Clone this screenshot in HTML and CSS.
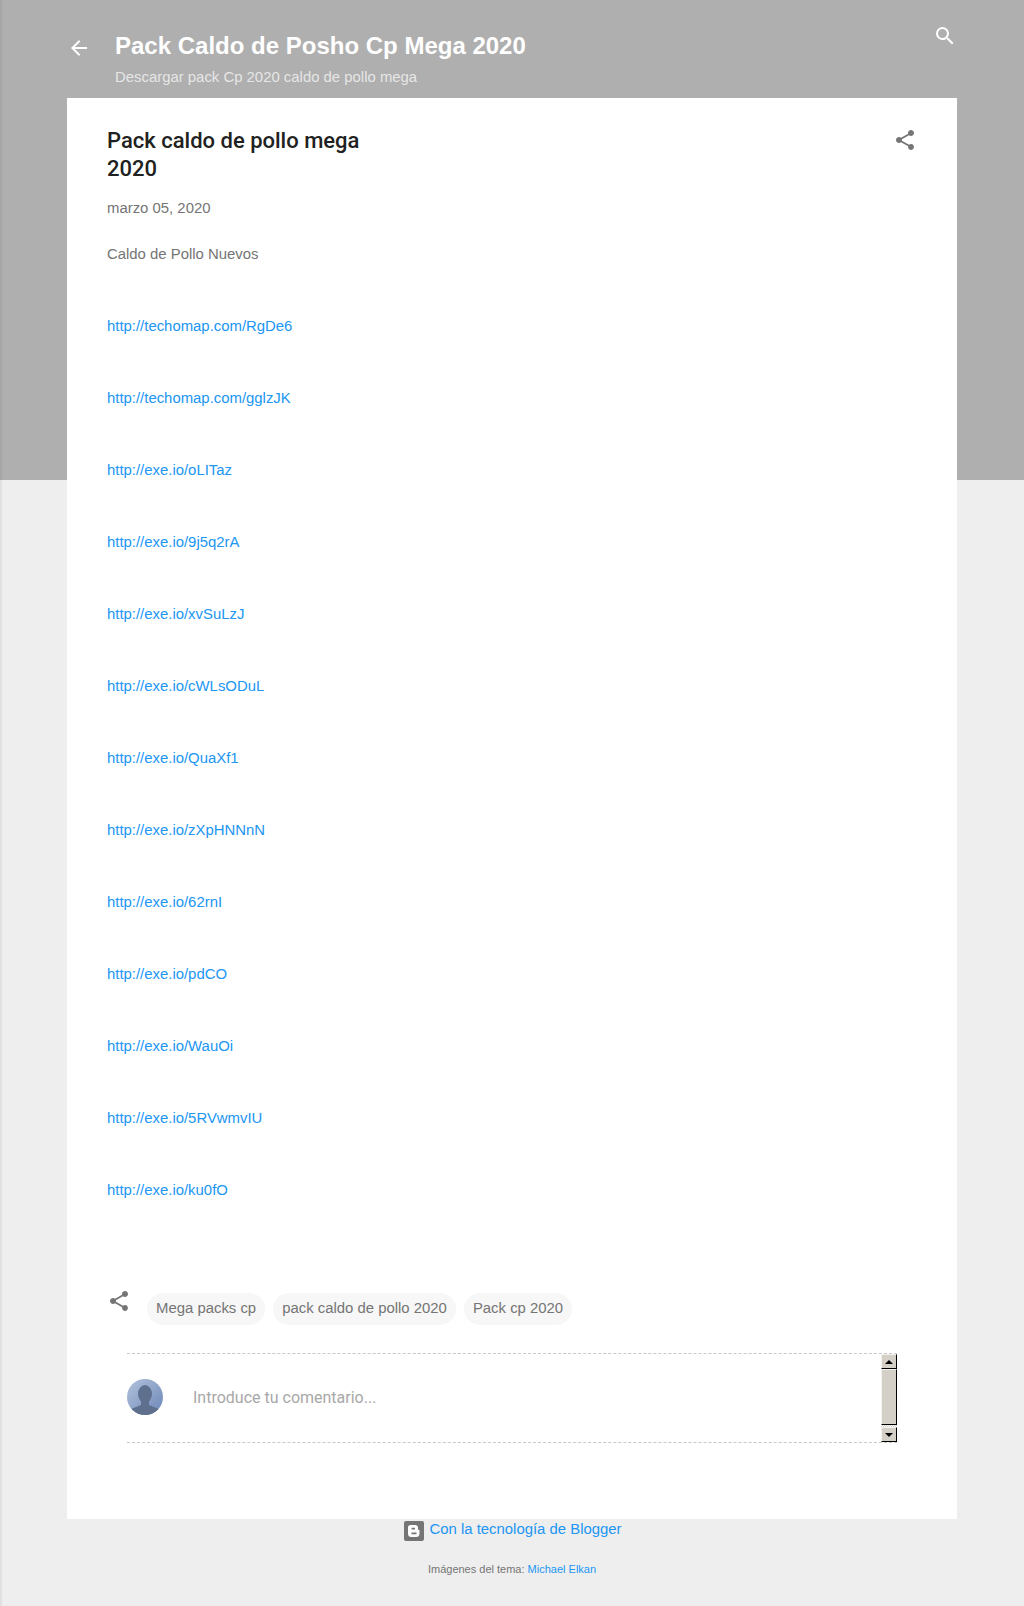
FILE: index.html
```html
<!DOCTYPE html>
<html lang="es">
<head>
  <meta charset="UTF-8">
  <title>Pack caldo de pollo mega 2020</title>
  <meta name="viewport" content="width=device-width, initial-scale=1.0">
  <link rel="stylesheet" href="styles.css">
</head>
<body>

  <header class="site-head">
    <svg class="back-icon" viewBox="0 0 24 24"><path d="M20 11H7.83l5.59-5.59L12 4l-8 8 8 8 1.41-1.41L7.83 13H20v-2z"/></svg>
    <div class="site-titles">
      <h1>Pack Caldo de Posho Cp Mega 2020</h1>
      <p>Descargar pack Cp 2020 caldo de pollo mega</p>
    </div>
    <svg class="search-icon" viewBox="0 0 24 24"><path d="M15.5 14h-.79l-.28-.27A6.47 6.47 0 0 0 16 9.5 6.5 6.5 0 1 0 9.5 16c1.61 0 3.09-.59 4.23-1.57l.27.28v.79l5 4.99L20.49 19l-4.99-5zm-6 0C7.01 14 5 11.99 5 9.5S7.01 5 9.5 5 14 7.01 14 9.5 11.99 14 9.5 14z"/></svg>
  </header>

  <main class="card">
    <div class="post-head">
      <h2>Pack caldo de pollo mega 2020</h2>
      <svg class="share-icon" viewBox="0 0 24 24"><path d="M18 16.08c-.76 0-1.44.3-1.96.77L8.91 12.7c.05-.23.09-.46.09-.7s-.04-.47-.09-.7l7.05-4.11c.54.5 1.25.81 2.04.81 1.66 0 3-1.34 3-3s-1.34-3-3-3-3 1.34-3 3c0 .24.04.47.09.7L8.04 9.81C7.5 9.31 6.79 9 6 9c-1.66 0-3 1.34-3 3s1.34 3 3 3c.79 0 1.5-.31 2.04-.81l7.12 4.16c-.05.21-.08.43-.08.65 0 1.61 1.31 2.92 2.92 2.92s2.92-1.31 2.92-2.92-1.31-2.92-2.92-2.92z"/></svg>
    </div>
    <p class="post-date">marzo 05, 2020</p>

    <div class="post-body">
      <p>Caldo de Pollo Nuevos</p>
      <a href="#">http://techomap.com/RgDe6</a>
      <a href="#">http://techomap.com/gglzJK</a>
      <a href="#">http://exe.io/oLITaz</a>
      <a href="#">http://exe.io/9j5q2rA</a>
      <a href="#">http://exe.io/xvSuLzJ</a>
      <a href="#">http://exe.io/cWLsODuL</a>
      <a href="#">http://exe.io/QuaXf1</a>
      <a href="#">http://exe.io/zXpHNNnN</a>
      <a href="#">http://exe.io/62rnI</a>
      <a href="#">http://exe.io/pdCO</a>
      <a href="#">http://exe.io/WauOi</a>
      <a href="#">http://exe.io/5RVwmvIU</a>
      <a href="#">http://exe.io/ku0fO</a>
    </div>

    <div class="post-foot">
      <svg class="share-icon" viewBox="0 0 24 24"><path d="M18 16.08c-.76 0-1.44.3-1.96.77L8.91 12.7c.05-.23.09-.46.09-.7s-.04-.47-.09-.7l7.05-4.11c.54.5 1.25.81 2.04.81 1.66 0 3-1.34 3-3s-1.34-3-3-3-3 1.34-3 3c0 .24.04.47.09.7L8.04 9.81C7.5 9.31 6.79 9 6 9c-1.66 0-3 1.34-3 3s1.34 3 3 3c.79 0 1.5-.31 2.04-.81l7.12 4.16c-.05.21-.08.43-.08.65 0 1.61 1.31 2.92 2.92 2.92s2.92-1.31 2.92-2.92-1.31-2.92-2.92-2.92z"/></svg>
      <div class="labels">
        <a href="#">Mega packs cp</a>
        <a href="#">pack caldo de pollo 2020</a>
        <a href="#">Pack cp 2020</a>
      </div>
    </div>

    <div class="comment-box">
      <div class="comment-row">
        <svg class="avatar" viewBox="0 0 36 36">
          <defs>
            <linearGradient id="avatar-bg" x1="0" y1="0" x2="1" y2="1">
              <stop offset="0" stop-color="#b4c3dc"/>
              <stop offset="1" stop-color="#6a86b8"/>
            </linearGradient>
            <clipPath id="avatar-clip"><circle cx="18" cy="18" r="18"/></clipPath>
          </defs>
          <g clip-path="url(#avatar-clip)">
            <rect width="36" height="36" fill="url(#avatar-bg)"/>
            <ellipse cx="18" cy="15" rx="7" ry="9" fill="#5f6f8e"/>
            <path d="M14 22h8v4l10 4v6H4v-6l10-4z" fill="#5f6f8e"/>
          </g>
        </svg>
        <span class="comment-hint">Introduce tu comentario...</span>
      </div>
      <div class="scrollbar">
        <span class="scroll-btn"><i class="arrow-up"></i></span>
        <span class="scroll-thumb"></span>
        <span class="scroll-track"></span>
        <span class="scroll-btn"><i class="arrow-down"></i></span>
      </div>
    </div>
  </main>

  <footer class="site-foot">
    <a class="powered" href="#">
      <svg class="blogger-icon" viewBox="0 0 20 20">
        <rect width="20" height="20" rx="2" fill="#757575"/>
        <path d="M6.500 4h4.500a3 3 0 0 1 3 3v1.200c0 .5.3.8.8.8h.7v3.500a3.500 3.500 0 0 1-3.500 3.500H7.500A3.500 3.500 0 0 1 4 12.500V6.500A2.500 2.500 0 0 1 6.500 4zm1 2.800v1.700h3.500V6.800zm0 4.700v1.700h5v-1.700z" fill="#fff" fill-rule="evenodd"/>
      </svg>
      <span>Con la tecnología de Blogger</span>
    </a>
    <p class="credit">Imágenes del tema: <a href="#">Michael Elkan</a></p>
  </footer>

</body>
</html>
```

FILE: styles.css
```css
body {
  margin: 0;
  height: 1606px;
  overflow: hidden;
  font-family: 'Liberation Sans', Arial, sans-serif;
  font-size: 14.9px;
  color: #757575;
  background: linear-gradient(#afafaf 480px, #eeeeee 480px);
  box-shadow: inset 2px 0 0 rgba(0, 0, 0, 0.05);
}
a {
  color: #2196f3;
  text-decoration: none;
}
.site-head {
  height: 98px;
  box-sizing: border-box;
  padding: 0 67px 0 67px;
  display: flex;
  align-items: flex-start;
  color: #fff;
}
.back-icon {
  width: 24px;
  height: 24px;
  margin-top: 36px;
  fill: #fff;
}
.site-titles {
  margin-left: 24px;
  flex: 1;
}
.site-titles h1 {
  margin: 31px 0 0;
  font-size: 24px;
  line-height: 30px;
  font-weight: bold;
}
.site-titles p {
  margin: 8px 0 0;
  font-size: 14.9px;
  line-height: 17px;
  color: #e6e6e6;
}
.search-icon {
  width: 24px;
  height: 24px;
  margin-top: 24px;
  fill: #fff;
}
.card {
  width: 890px;
  height: 1421px;
  box-sizing: border-box;
  margin-left: 67px;
  padding: 29px 40px 0;
  background: #fff;
}
.post-head {
  display: flex;
  justify-content: space-between;
  align-items: flex-start;
}
.post-head h2 {
  margin: 0;
  width: 280px;
  font-family: Roboto, sans-serif;
  font-size: 22px;
  line-height: 28px;
  font-weight: 500;
  color: #212121;
}
.share-icon {
  width: 24px;
  height: 24px;
  margin-top: 1px;
  fill: #757575;
}
.post-date {
  margin: 17px 0 0;
  font-size: 14.9px;
  line-height: 17px;
}
.post-body {
  margin-top: 29px;
  display: flex;
  flex-direction: column;
  align-items: flex-start;
  gap: 55px;
  font-size: 14.9px;
  line-height: 17px;
}
.post-body p {
  margin: 0;
}
.post-foot {
  margin-top: 89px;
  display: flex;
  align-items: flex-start;
}
.labels {
  margin-left: 16px;
  margin-top: 5px;
  display: flex;
  gap: 8px;
}
.labels a {
  padding: 7px 9px 8px;
  line-height: 17px;
  font-size: 14.9px;
  color: #757575;
  background: #f7f7f7;
  border-radius: 16px;
}
.comment-box {
  margin: 28px 20px 0 20px;
  height: 88px;
  display: flex;
  border-top: 1px dashed #c8c8c8;
  border-bottom: 1px dashed #c8c8c8;
}
.comment-row {
  flex: 1;
  display: flex;
  align-items: center;
  padding-bottom: 2px;
}
.avatar {
  width: 36px;
  height: 36px;
}
.comment-hint {
  margin-left: 30px;
  font-family: Roboto, sans-serif;
  font-size: 16px;
  color: #a8a8a8;
}
.scrollbar {
  width: 16px;
  display: flex;
  flex-direction: column;
}
.scroll-btn {
  height: 15px;
  box-sizing: border-box;
  display: flex;
  align-items: center;
  justify-content: center;
  background: #d4d0c8;
  border: 1px solid;
  border-color: #f4f2ee #000 #000 #f4f2ee;
}
.scroll-thumb {
  height: 56px;
  box-sizing: border-box;
  background: #d4d0c8;
  border: 1px solid;
  border-color: #f4f2ee #000 #000 #f4f2ee;
}
.scroll-track {
  flex: 1;
  background: repeating-conic-gradient(#d4d0c8 0 25%, #fff 0 50%) 0 0 / 2px 2px;
}
.arrow-up {
  border: 4px solid transparent;
  border-top: 0;
  border-bottom: 4px solid #000;
}
.arrow-down {
  border: 4px solid transparent;
  border-bottom: 0;
  border-top: 4px solid #000;
}
.site-foot {
  text-align: center;
  padding-left: 2px;
}
.powered {
  display: inline-flex;
  align-items: flex-start;
  gap: 5px;
  margin-top: 2px;
  font-size: 14.9px;
  line-height: 17px;
}
.blogger-icon {
  width: 20px;
  height: 20px;
}
.credit {
  margin: 19px 2px 0 0;
  font-size: 11px;
  line-height: 13px;
}
```
